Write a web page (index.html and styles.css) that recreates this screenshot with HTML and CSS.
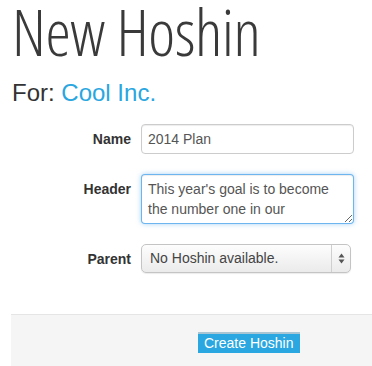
FILE: index.html
```html
<!DOCTYPE html>
<html>
<head>
<meta charset="utf-8">
<title>New Hoshin</title>
<link rel="stylesheet" href="styles.css">
</head>
<body>
<div class="page">
  <h1 class="title">New Hoshin</h1>
  <h2 class="for">For: <a class="company" href="#">Cool Inc.</a></h2>
  <form class="form">
    <div class="row">
      <label class="label" for="name">Name</label>
      <input class="input" id="name" type="text" value="2014 Plan">
    </div>
    <div class="row">
      <label class="label" for="header">Header</label>
      <textarea class="textarea" id="header" rows="2">This year's goal is to become the number one in our marketplace.</textarea>
    </div>
    <div class="row">
      <label class="label">Parent</label>
      <div class="select">
        <span class="select-text">No Hoshin available.</span>
        <span class="select-arrows">
          <svg width="7" height="11" viewBox="0 0 7 11"><path d="M3.5 0.5 L6.5 4.5 L0.5 4.5 Z" fill="#555"/><path d="M3.5 10.5 L6.5 6.5 L0.5 6.5 Z" fill="#555"/></svg>
        </span>
      </div>
    </div>
  </form>
  <div class="actions">
    <button class="btn" type="button">Create Hoshin</button>
  </div>
</div>
</body>
</html>
```
FILE: styles.css
```css
html, body {
  margin: 0;
  padding: 0;
  background: #fff;
  overflow: hidden;
}
body {
  font-family: "Liberation Sans", Arial, sans-serif;
  color: #333;
}
.page {
  padding-left: 11px;
}
.title {
  margin: 0;
  padding-left: 1px;
  font-family: "Open Sans", sans-serif;
  font-weight: 300;
  font-stretch: 75%;
  font-size: 64px;
  line-height: 64px;
  color: #3a3a3a;
  letter-spacing: -0.4px;
}
.for {
  margin: 14px 0 0 1px;
  font-size: 24px;
  font-weight: normal;
  line-height: 30px;
  color: #333;
}
.company {
  color: #2aa6e0;
  text-decoration: none;
}
.form {
  margin-top: 16px;
  display: flex;
  flex-direction: column;
  gap: 20px;
}
.row {
  display: grid;
  grid-template-columns: 120px auto;
  column-gap: 10px;
  align-items: start;
}
.label {
  text-align: right;
  font-size: 14px;
  font-weight: bold;
  line-height: 20px;
  padding-top: 5px;
  color: #333;
}
.input, .textarea {
  box-sizing: border-box;
  width: 213px;
  margin: 0;
  font-family: "Liberation Sans", Arial, sans-serif;
  font-size: 14px;
  line-height: 20px;
  color: #555;
  padding: 4px 6px;
  border: 1px solid #ccc;
  border-radius: 4px;
  background: #fff;
  box-shadow: inset 0 1px 1px rgba(0,0,0,0.075);
  outline: none;
}
.input {
  height: 30px;
}
.textarea {
  height: 50px;
  overflow: hidden;
  resize: vertical;
  border-color: rgba(82,168,236,0.85);
  box-shadow: inset 0 1px 1px rgba(0,0,0,0.075), 0 0 5px rgba(82,168,236,0.5);
}
.select {
  box-sizing: border-box;
  width: 210px;
  height: 29px;
  display: flex;
  align-items: stretch;
  border: 1px solid #c4c4c4;
  border-radius: 5px;
  background: linear-gradient(#fdfdfd, #ebebeb);
  box-shadow: 0 1px 1px rgba(0,0,0,0.08);
}
.select-text {
  flex: 1;
  padding-left: 8px;
  font-size: 14px;
  line-height: 27px;
  color: #444;
}
.select-arrows {
  width: 18px;
  border-left: 1px solid #cfcfcf;
  display: flex;
  align-items: center;
  justify-content: center;
}
.actions {
  margin-top: 41px;
  border-top: 1px solid #e5e5e5;
  background: #f5f5f5;
  padding: 17px 0 30px 187px;
}
.btn {
  margin: 0;
  height: 21px;
  padding: 0 6px;
  border: 0;
  border-top: 2px solid #a9c4d3;
  background: #2aa6e0;
  color: #fff;
  font-family: "Liberation Sans", Arial, sans-serif;
  font-size: 14px;
  line-height: 19px;
  border-radius: 0;
}
```
